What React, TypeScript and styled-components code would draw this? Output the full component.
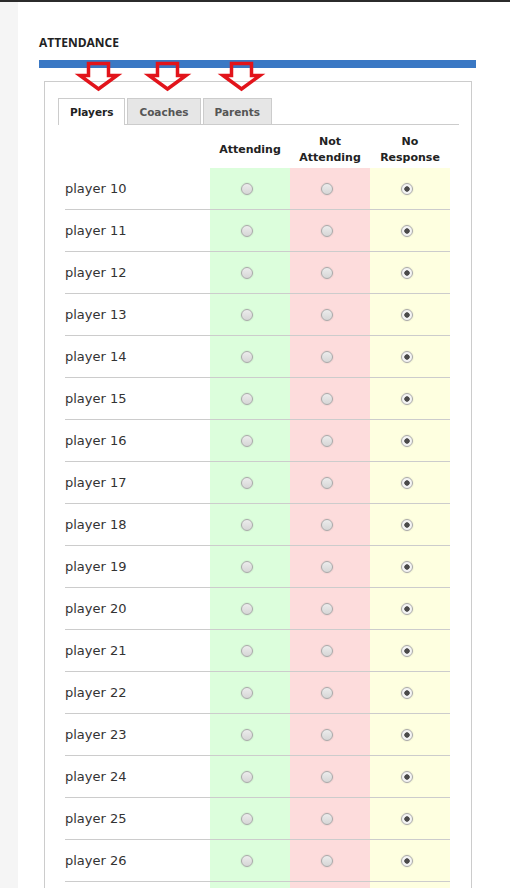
import styled, { createGlobalStyle } from "styled-components";

const GlobalStyle = createGlobalStyle`
  html, body {
    margin: 0;
    padding: 0;
    overflow: hidden;
    background: #ffffff;
  }
  body {
    font-family: "DejaVu Sans", Verdana, sans-serif;
    color: #333333;
  }
`;

type Status = "yes" | "no" | "none";

const players = Array.from({ length: 18 }, (_, i) => ({
  name: `player ${i + 10}`,
  status: "none" as Status,
}));

const columns: { key: Status; label: string[]; bg: string }[] = [
  { key: "yes", label: ["Attending"], bg: "#dcfedc" },
  { key: "no", label: ["Not", "Attending"], bg: "#fddcdc" },
  { key: "none", label: ["No", "Response"], bg: "#feffe0" },
];

const Page = styled.div`
  display: flex;
  min-height: 888px;
  border-top: 2px solid #2b2b2b;
  box-sizing: border-box;
`;

const Gutter = styled.div`
  width: 18px;
  flex: none;
  background: #f5f5f5;
`;

const Main = styled.div`
  position: relative;
  width: 437px;
  padding: 33px 0 0 21px;
`;

const Title = styled.h2`
  margin: 0 0 9px;
  font-family: "Open Sans", "DejaVu Sans", sans-serif;
  font-size: 12px;
  line-height: 16px;
  font-weight: 700;
  color: #222222;
`;

const BlueBar = styled.div`
  height: 8px;
  background: #3a78c4;
`;

const ArrowMark = styled.svg<{ $left: number }>`
  position: absolute;
  top: 58px;
  left: ${({ $left }) => $left}px;
  width: 41px;
  height: 30px;
  overflow: visible;
`;

const Panel = styled.div`
  margin: 13px 4px 0 5px;
  padding: 16px 12px 0 13px;
  border: 1px solid #cccccc;
  border-bottom: none;
  min-height: 900px;
`;

const TabList = styled.div`
  display: flex;
  gap: 2px;
  border-bottom: 1px solid #cccccc;
`;

const Tab = styled.div<{ $active?: boolean }>`
  height: 25px;
  padding: 0 11px;
  display: flex;
  align-items: center;
  font-size: 10.5px;
  font-weight: 700;
  color: ${({ $active }) => ($active ? "#222222" : "#555555")};
  background: ${({ $active }) => ($active ? "#ffffff" : "#e6e6e6")};
  border: 1px solid #cccccc;
  border-bottom: none;
  margin-bottom: ${({ $active }) => ($active ? "-1px" : "0")};
  padding-bottom: ${({ $active }) => ($active ? "1px" : "0")};
`;

const Table = styled.div`
  margin: 5px 0 0 7px;
  width: 385px;
`;

const Row = styled.div<{ $header?: boolean }>`
  display: grid;
  grid-template-columns: 145px 80px 80px 80px;
  height: ${({ $header }) => ($header ? "38px" : "41px")};
  border-bottom: ${({ $header }) => ($header ? "none" : "1px solid #cccccc")};
`;

const HeadCell = styled.div`
  display: flex;
  flex-direction: column;
  align-items: center;
  justify-content: center;
  padding-top: 1px;
  font-size: 11px;
  line-height: 16px;
  font-weight: 700;
  color: #222222;
`;

const NameCell = styled.div`
  display: flex;
  align-items: center;
  font-size: 13px;
  color: #333333;
`;

const ChoiceCell = styled.div<{ $bg: string }>`
  display: flex;
  align-items: center;
  justify-content: center;
  padding-right: 6px;
  background: ${({ $bg }) => $bg};
`;

const Radio = styled.input`
  appearance: none;
  margin: 0;
  width: 12px;
  height: 12px;
  border-radius: 50%;
  border: 1px solid #a9a9a9;
  box-sizing: border-box;
  background: linear-gradient(#ececec, #d6d6d6);
  box-shadow: 0 0 0 1px rgba(0, 0, 0, 0.04);

  &:checked {
    background: radial-gradient(circle, #4a4a4a 0 2.4px, #f4f4f4 3px);
  }
`;

const Arrow = ({ left }: { left: number }) => (
  <ArrowMark $left={left} viewBox="0 0 41 30">
    <path
      d="M10.5 3.5 H30.5 V15.5 H39 L20.5 29 L2 15.5 H10.5 Z"
      fill="none"
      stroke="#e2141b"
      strokeWidth="3.5"
      strokeLinejoin="miter"
    />
  </ArrowMark>
);

export default function App() {
  return (
    <>
      <GlobalStyle />
      <Page>
        <Gutter />
        <Main>
          <Title>ATTENDANCE</Title>
          <BlueBar />
          <Arrow left={60} />
          <Arrow left={129} />
          <Arrow left={203} />
          <Panel>
            <TabList>
              <Tab $active>Players</Tab>
              <Tab>Coaches</Tab>
              <Tab>Parents</Tab>
            </TabList>
            <Table>
              <Row $header>
                <HeadCell />
                {columns.map((c) => (
                  <HeadCell key={c.key}>
                    {c.label.map((l) => (
                      <span key={l}>{l}</span>
                    ))}
                  </HeadCell>
                ))}
              </Row>
              {players.map((p) => (
                <Row key={p.name}>
                  <NameCell>{p.name}</NameCell>
                  {columns.map((c) => (
                    <ChoiceCell key={c.key} $bg={c.bg}>
                      <Radio
                        type="radio"
                        name={p.name}
                        defaultChecked={p.status === c.key}
                      />
                    </ChoiceCell>
                  ))}
                </Row>
              ))}
            </Table>
          </Panel>
        </Main>
      </Page>
    </>
  );
}
